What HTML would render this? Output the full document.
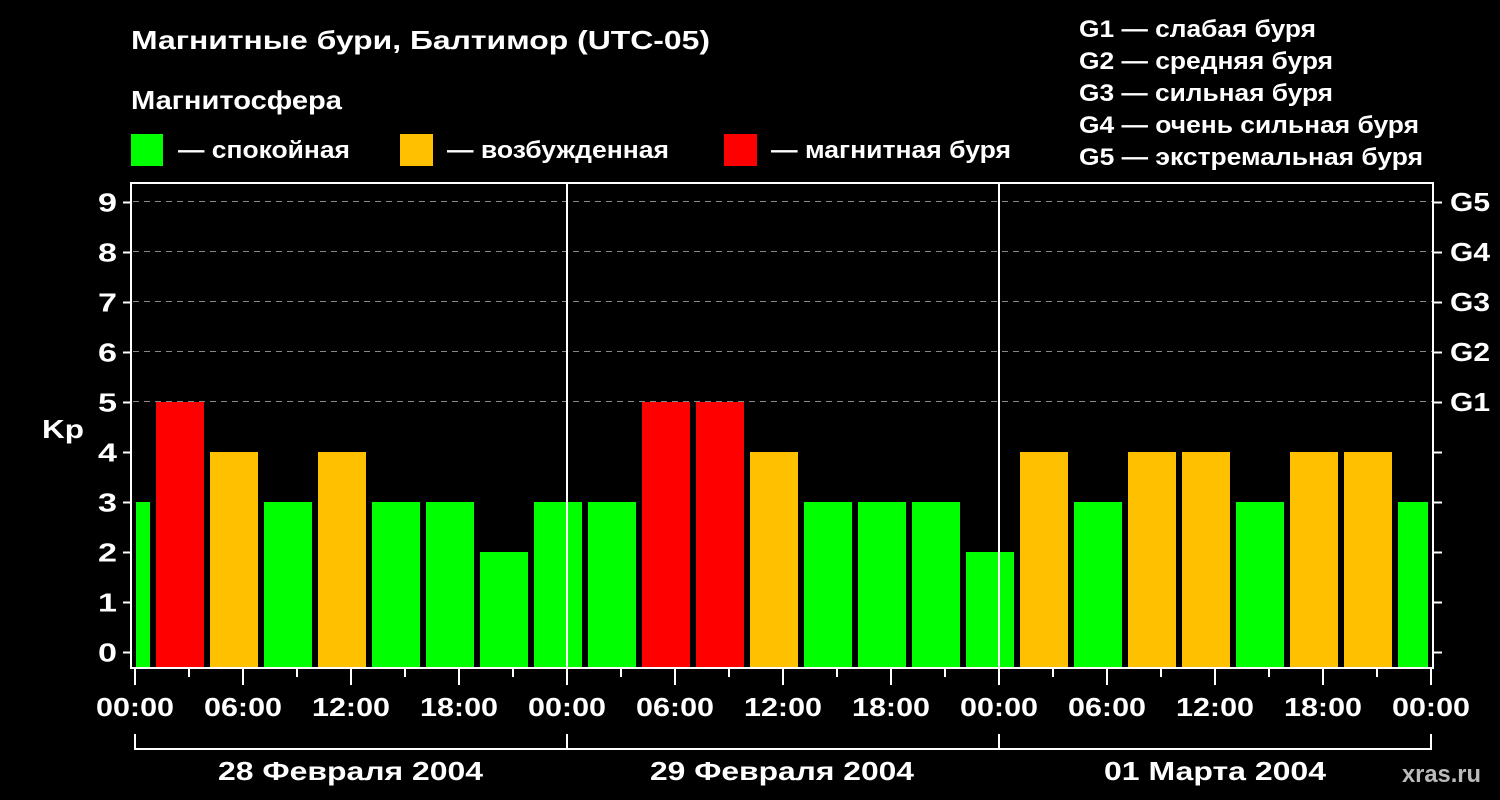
<!DOCTYPE html>
<html><head><meta charset="utf-8"><style>
html,body{margin:0;padding:0;background:#000;width:1500px;height:800px;overflow:hidden}
svg text{font-family:"Liberation Sans",sans-serif;font-weight:bold;fill:#fff}
</style></head><body>
<svg width="1500" height="800" xmlns="http://www.w3.org/2000/svg">
<rect width="1500" height="800" fill="#000"/>
<text x="131" y="49" font-size="26" textLength="579" lengthAdjust="spacingAndGlyphs">Магнитные бури, Балтимор (UTC-05)</text>
<text x="131" y="109" font-size="26" textLength="211" lengthAdjust="spacingAndGlyphs">Магнитосфера</text>
<rect x="131" y="134" width="32" height="32" fill="#00ff00"/>
<text x="178" y="158" font-size="24" textLength="172" lengthAdjust="spacingAndGlyphs">— спокойная</text>
<rect x="400" y="134" width="33" height="32" fill="#ffc000"/>
<text x="447" y="158" font-size="24" textLength="222" lengthAdjust="spacingAndGlyphs">— возбужденная</text>
<rect x="724" y="134" width="33" height="32" fill="#ff0000"/>
<text x="771" y="158" font-size="24" textLength="240" lengthAdjust="spacingAndGlyphs">— магнитная буря</text>
<g font-size="24">
<text x="1079" y="37" textLength="237" lengthAdjust="spacingAndGlyphs">G1 — слабая буря</text>
<text x="1079" y="69" textLength="254" lengthAdjust="spacingAndGlyphs">G2 — средняя буря</text>
<text x="1079" y="101" textLength="254" lengthAdjust="spacingAndGlyphs">G3 — сильная буря</text>
<text x="1079" y="133" textLength="340" lengthAdjust="spacingAndGlyphs">G4 — очень сильная буря</text>
<text x="1079" y="165" textLength="344" lengthAdjust="spacingAndGlyphs">G5 — экстремальная буря</text>
</g>
<g stroke="#888" stroke-width="1" stroke-dasharray="6,5">
<line x1="133" y1="201.5" x2="1432" y2="201.5"/>
<line x1="133" y1="251.5" x2="1432" y2="251.5"/>
<line x1="133" y1="301.5" x2="1432" y2="301.5"/>
<line x1="133" y1="351.5" x2="1432" y2="351.5"/>
<line x1="133" y1="401.5" x2="1432" y2="401.5"/>
</g>
<g id="bars"></g>
<g stroke="#fff" stroke-width="2" fill="none">
<polyline points="131,668 131,183 1433,183 1433,668"/>
<line x1="130" y1="668" x2="1434" y2="668"/>
<line x1="567" y1="183" x2="567" y2="668"/>
<line x1="999" y1="183" x2="999" y2="668"/>
<polyline points="135,734 135,749 1431,749 1431,734"/>
<line x1="567" y1="734" x2="567" y2="749"/>
<line x1="999" y1="734" x2="999" y2="749"/>
</g>
<g id="ticks" stroke="#fff" stroke-width="2"></g>
<g font-size="26" id="ylab"></g>
<text x="42" y="438" font-size="26" textLength="42" lengthAdjust="spacingAndGlyphs">Kp</text>
<g font-size="26">
<text x="1450" y="211" textLength="40" lengthAdjust="spacingAndGlyphs">G5</text>
<text x="1450" y="261" textLength="40" lengthAdjust="spacingAndGlyphs">G4</text>
<text x="1450" y="311" textLength="40" lengthAdjust="spacingAndGlyphs">G3</text>
<text x="1450" y="361" textLength="40" lengthAdjust="spacingAndGlyphs">G2</text>
<text x="1450" y="411" textLength="40" lengthAdjust="spacingAndGlyphs">G1</text>
</g>
<g font-size="26" id="xlab"></g>
<g font-size="26">
<text x="218" y="780" textLength="265" lengthAdjust="spacingAndGlyphs">28 Февраля 2004</text>
<text x="650" y="780" textLength="264" lengthAdjust="spacingAndGlyphs">29 Февраля 2004</text>
<text x="1104" y="780" textLength="222" lengthAdjust="spacingAndGlyphs">01 Марта 2004</text>
</g>
<text x="1402" y="782" font-size="24" style="fill:#bbb" textLength="79" lengthAdjust="spacingAndGlyphs">xras.ru</text>
</svg>
<script>
var ns="http://www.w3.org/2000/svg";
function el(p,t,a){var e=document.createElementNS(ns,t);for(var k in a)e.setAttribute(k,a[k]);p.appendChild(e);return e}
var vals=[3,5,4,3,4,3,3,2,3,3,5,5,4,3,3,3,2,4,3,4,4,3,4,4,3];
var bars=document.getElementById('bars');
vals.forEach(function(v,i){var x=102+54*i,w=48;if(x<136){w-=136-x;x=136}if(x+w>1428)w=1428-x;
var c=v>=5?'#ff0000':v==4?'#ffc000':'#00ff00';var top=652-50*v;
el(bars,'rect',{x:x,y:top,width:w,height:668-top,fill:c});});
var t=document.getElementById('ticks'),yl=document.getElementById('ylab'),xl=document.getElementById('xlab');
for(var k=0;k<=9;k++){var y=652-50*k+0.5;el(t,'line',{x1:123,y1:y,x2:131,y2:y});el(t,'line',{x1:1433,y1:y,x2:1442,y2:y});
var tx=el(yl,'text',{x:98,y:y+9,textLength:19,lengthAdjust:'spacingAndGlyphs'});tx.textContent=k;}
var labs=['00:00','06:00','12:00','18:00'];
for(var h=0;h<=24;h++){var x=135+54*h;var big=h%2==0;el(t,'line',{x1:x,y1:669,x2:x,y2:big?685:677});
if(big){var tx=el(xl,'text',{x:x-39,y:716,textLength:78,lengthAdjust:'spacingAndGlyphs'});tx.textContent=labs[(h/2)%4];}}
</script>
</body></html>
